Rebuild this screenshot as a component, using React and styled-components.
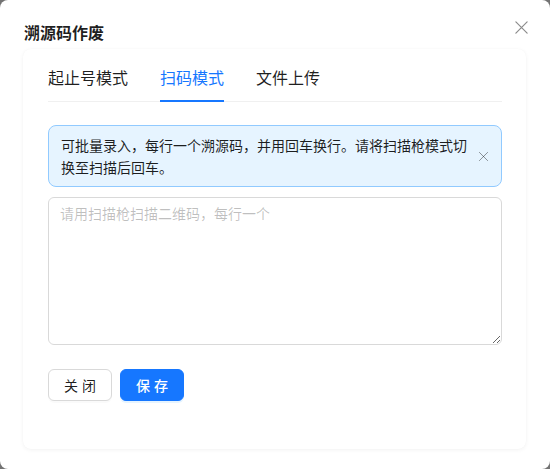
import React, { useState } from "react";
import styled, { createGlobalStyle } from "styled-components";

const GlobalStyle = createGlobalStyle`
  html, body {
    margin: 0;
    padding: 0;
    background: #737373;
  }
  * {
    box-sizing: border-box;
  }
  body {
    font-family: "Noto Sans CJK SC", "Noto Sans", "Liberation Sans", sans-serif;
    color: rgba(0, 0, 0, 0.88);
  }
`;

const Modal = styled.div`
  width: 550px;
  height: 469px;
  background: #fff;
  border-radius: 8px;
  display: flex;
  flex-direction: column;
  overflow: hidden;
`;

const Header = styled.div`
  display: flex;
  align-items: center;
  justify-content: space-between;
  padding: 20px 21px 4px 24px;
`;

const Title = styled.div`
  font-size: 16px;
  line-height: 24px;
  font-weight: 600;
  color: rgba(0, 0, 0, 0.88);
`;

const IconButton = styled.button`
  border: 0;
  background: transparent;
  padding: 0;
  margin: 0;
  display: flex;
  align-items: center;
  justify-content: center;
  width: ${(p) => p.size}px;
  height: ${(p) => p.size}px;
  color: rgba(0, 0, 0, 0.45);
  cursor: pointer;
  margin-top: ${(p) => p.offset || 0}px;
`;

const Card = styled.div`
  margin: 1px 24px 0 23px;
  height: 400px;
  border-radius: 8px;
  background: #fff;
  box-shadow: 0 1px 4px rgba(0, 0, 0, 0.05), 0 0 1px rgba(0, 0, 0, 0.04);
  padding: 4px 24px 0 25px;
`;

const TabNav = styled.div`
  display: flex;
  gap: 32px;
  border-bottom: 1px solid #f0f0f0;
  margin-bottom: 23px;
`;

const Tab = styled.div`
  position: relative;
  padding: 12px 0;
  font-size: 16px;
  line-height: 24px;
  color: ${(p) => (p.active ? "#1677ff" : "rgba(0, 0, 0, 0.88)")};
  cursor: pointer;
  &::after {
    content: "";
    display: ${(p) => (p.active ? "block" : "none")};
    position: absolute;
    left: 0;
    right: 0;
    bottom: -1px;
    height: 2px;
    background: #1677ff;
  }
`;

const Alert = styled.div`
  display: flex;
  align-items: center;
  gap: 8px;
  padding: 8px 12px;
  background: #e6f4ff;
  border: 1px solid #91caff;
  border-radius: 8px;
  font-size: 14px;
  line-height: 22px;
  color: rgba(0, 0, 0, 0.88);
`;

const AlertText = styled.div`
  flex: 1;
`;

const TextArea = styled.textarea`
  display: block;
  width: 100%;
  height: 148px;
  margin-top: 10px;
  padding: 4px 11px;
  border: 1px solid #d9d9d9;
  border-radius: 6px;
  font-family: inherit;
  font-size: 14px;
  line-height: 22px;
  color: rgba(0, 0, 0, 0.88);
  resize: vertical;
  outline: none;
  &::placeholder {
    color: rgba(0, 0, 0, 0.25);
  }
`;

const Actions = styled.div`
  display: flex;
  gap: 8px;
  margin-top: 24px;
`;

const Button = styled.button`
  width: 64px;
  height: 32px;
  border-radius: 6px;
  font-family: inherit;
  font-size: 14px;
  letter-spacing: 4px;
  padding: 0 0 0 4px;
  cursor: pointer;
  border: 1px solid ${(p) => (p.primary ? "#1677ff" : "#d9d9d9")};
  background: ${(p) => (p.primary ? "#1677ff" : "#fff")};
  color: ${(p) => (p.primary ? "#fff" : "rgba(0, 0, 0, 0.88)")};
  font-weight: ${(p) => (p.primary ? 500 : 400)};
  box-shadow: ${(p) =>
    p.primary ? "0 2px 0 rgba(5, 145, 255, 0.1)" : "0 2px 0 rgba(0, 0, 0, 0.02)"};
`;

const CloseIcon = ({ size }) => (
  <svg width={size} height={size} viewBox="0 0 16 16" fill="none">
    <path d="M2 2L14 14M14 2L2 14" stroke="currentColor" strokeWidth="1.3" strokeLinecap="round" />
  </svg>
);

const tabs = ["起止号模式", "扫码模式", "文件上传"];

const App = () => {
  const [active, setActive] = useState(1);
  const [showAlert, setShowAlert] = useState(true);
  const [codes, setCodes] = useState("");

  return (
    <>
      <GlobalStyle />
      <Modal>
        <Header>
          <Title>溯源码作废</Title>
          <IconButton size={16} offset={-10}>
            <CloseIcon size={15} />
          </IconButton>
        </Header>
        <Card>
          <TabNav>
            {tabs.map((t, i) => (
              <Tab key={t} active={i === active} onClick={() => setActive(i)}>
                {t}
              </Tab>
            ))}
          </TabNav>
          {showAlert && (
            <Alert>
              <AlertText>
                可批量录入，每行一个溯源码，并用回车换行。请将扫描枪模式切换至扫描后回车。
              </AlertText>
              <IconButton size={12} onClick={() => setShowAlert(false)}>
                <CloseIcon size={11} />
              </IconButton>
            </Alert>
          )}
          <TextArea
            placeholder="请用扫描枪扫描二维码，每行一个"
            value={codes}
            onChange={(e) => setCodes(e.target.value)}
          />
          <Actions>
            <Button>关闭</Button>
            <Button primary>保存</Button>
          </Actions>
        </Card>
      </Modal>
    </>
  );
};

export default App;
